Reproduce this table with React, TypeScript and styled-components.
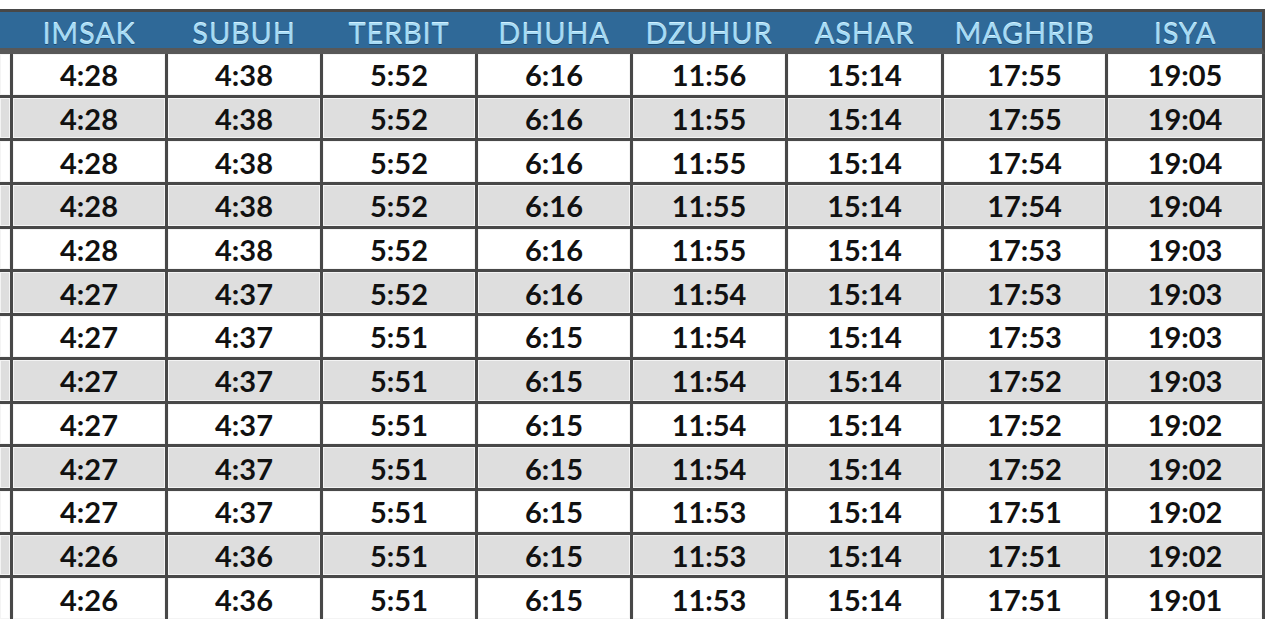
import React from 'react';
import styled, { createGlobalStyle } from 'styled-components';

const GlobalStyle = createGlobalStyle`
  html, body {
    margin: 0;
    padding: 0;
    background: #ffffff;
    overflow: hidden;
  }
`;

const COLUMNS = '10px 152px 152px 152px 152px 152px 153px 161px 154px';
const LINE = '#484848';

const headers = ['IMSAK', 'SUBUH', 'TERBIT', 'DHUHA', 'DZUHUR', 'ASHAR', 'MAGHRIB', 'ISYA'];

const rows: string[][] = [
  ['4:28', '4:38', '5:52', '6:16', '11:56', '15:14', '17:55', '19:05'],
  ['4:28', '4:38', '5:52', '6:16', '11:55', '15:14', '17:55', '19:04'],
  ['4:28', '4:38', '5:52', '6:16', '11:55', '15:14', '17:54', '19:04'],
  ['4:28', '4:38', '5:52', '6:16', '11:55', '15:14', '17:54', '19:04'],
  ['4:28', '4:38', '5:52', '6:16', '11:55', '15:14', '17:53', '19:03'],
  ['4:27', '4:37', '5:52', '6:16', '11:54', '15:14', '17:53', '19:03'],
  ['4:27', '4:37', '5:51', '6:15', '11:54', '15:14', '17:53', '19:03'],
  ['4:27', '4:37', '5:51', '6:15', '11:54', '15:14', '17:52', '19:03'],
  ['4:27', '4:37', '5:51', '6:15', '11:54', '15:14', '17:52', '19:02'],
  ['4:27', '4:37', '5:51', '6:15', '11:54', '15:14', '17:52', '19:02'],
  ['4:27', '4:37', '5:51', '6:15', '11:53', '15:14', '17:51', '19:02'],
  ['4:26', '4:36', '5:51', '6:15', '11:53', '15:14', '17:51', '19:02'],
  ['4:26', '4:36', '5:51', '6:15', '11:53', '15:14', '17:51', '19:01'],
];

const Page = styled.div`
  padding-top: 9px;
  width: 1273px;
  height: 624px;
  box-sizing: border-box;
  font-family: Lato, 'Liberation Sans', sans-serif;
`;

const Table = styled.div`
  width: 1265px;
  display: flex;
  flex-direction: column;
`;

const HeaderRow = styled.div`
  display: grid;
  grid-template-columns: ${COLUMNS};
  column-gap: 3px;
  width: 1262px;
  height: 36px;
  align-items: center;
  background: #2f6998;
  border-top: 3px solid ${LINE};
  border-bottom: 6px solid #585858;
  border-right: 3px solid ${LINE};
`;

const HeaderCell = styled.div`
  text-align: center;
  font-size: 29px;
  font-weight: 400;
  line-height: 36px;
  padding-top: 3px;
  letter-spacing: 0.8px;
  color: #a6dbf5;
  text-shadow: 0 1px 0 #1d4c74, 0 -1px 0 #d2f0fd;
`;

const Body = styled.div`
  display: flex;
  flex-direction: column;
  gap: 3px;
  background: ${LINE};
  padding-right: 3px;
`;

const Row = styled.div`
  display: grid;
  grid-template-columns: ${COLUMNS};
  grid-auto-rows: 40.7px;
  column-gap: 3px;
`;

const Cell = styled.div<{ $shaded: boolean }>`
  display: flex;
  align-items: center;
  justify-content: center;
  background: ${({ $shaded }) => ($shaded ? '#dedede' : '#ffffff')};
  box-shadow: inset 0 0 0 1px #f4f4f4;
  font-size: 29px;
  font-weight: 700;
  color: #111111;
  padding-top: 1px;
  box-sizing: border-box;
`;

const App: React.FC = () => (
  <>
    <GlobalStyle />
    <Page>
      <Table>
        <HeaderRow>
          <HeaderCell />
          {headers.map((h) => (
            <HeaderCell key={h}>{h}</HeaderCell>
          ))}
        </HeaderRow>
        <Body>
          {rows.map((row, i) => (
            <Row key={i}>
              <Cell $shaded={i % 2 === 1} />
              {row.map((t, j) => (
                <Cell key={j} $shaded={i % 2 === 1}>
                  {t}
                </Cell>
              ))}
            </Row>
          ))}
        </Body>
      </Table>
    </Page>
  </>
);

export default App;
